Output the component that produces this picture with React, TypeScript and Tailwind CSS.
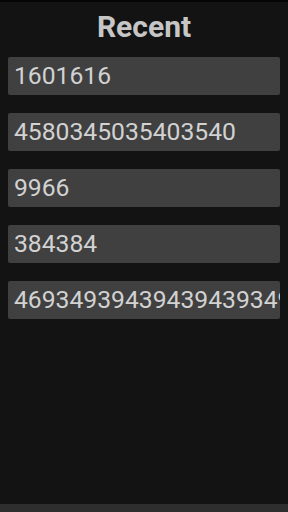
import React from "react";

const items = [
  "1601616",
  "4580345035403540",
  "9966",
  "384384",
  "4693493943943943934934",
];

export default function App() {
  return (
    <div
      className="w-[288px] h-[512px] bg-[#131313] flex flex-col overflow-hidden"
      style={{ fontFamily: "Roboto, 'Noto Sans', sans-serif" }}
    >
      <div className="h-[2px] bg-[#050505]" />
      <div className="flex-1 flex flex-col px-2">
        <h1 className="text-center font-bold text-[30px] leading-[30px] text-[#c6c6c6] mt-[10px] mb-[15px]">
          Recent
        </h1>
        <div className="flex flex-col gap-[18px]">
          {items.map((t) => (
            <div
              key={t}
              className="h-[38px] bg-[#404040] rounded-[2px] pl-[6px] flex items-center overflow-hidden whitespace-nowrap text-[24.7px] text-[#d2d2d2]"
            >
              {t}
            </div>
          ))}
        </div>
      </div>
      <div className="h-[8px] bg-[#2e2e2e]" />
    </div>
  );
}
